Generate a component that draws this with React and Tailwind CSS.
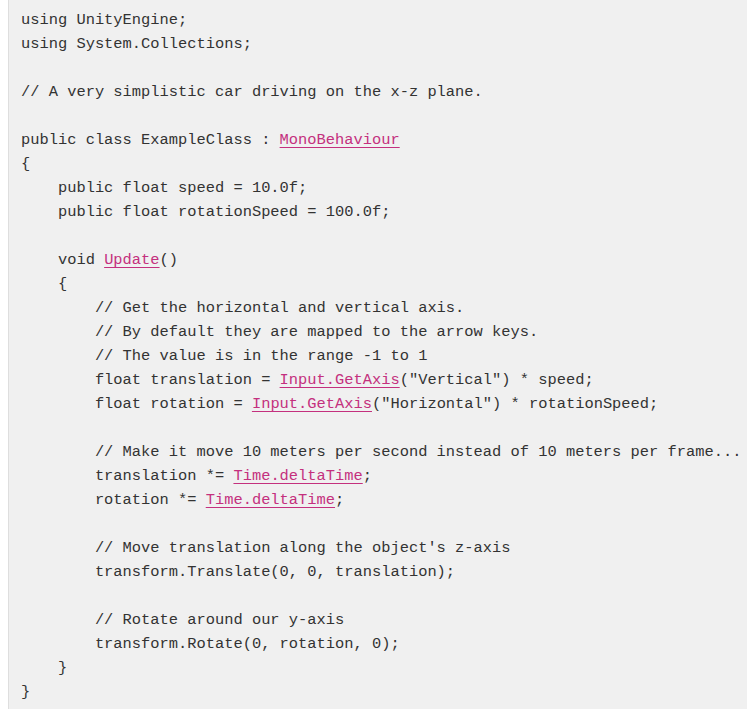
import React from "react";

const L = ({ children }) => (
  <span className="text-[#c4307e] underline decoration-1 underline-offset-[3px]">{children}</span>
);

export default function App() {
  return (
    <div className="bg-white pl-2 h-[709px] overflow-hidden">
      <div className="bg-[#f0f0f0] border-l border-[#dedede] h-full pl-3 pt-[8px] pb-4">
        <pre
          className="m-0 text-[15.4px] leading-[24px] text-[#333333] whitespace-pre"
          style={{ fontFamily: '"Liberation Mono", "DejaVu Sans Mono", monospace' }}
        >
{`using UnityEngine;
using System.Collections;

// A very simplistic car driving on the x-z plane.

public class ExampleClass : `}<L>MonoBehaviour</L>{`
{
    public float speed = 10.0f;
    public float rotationSpeed = 100.0f;

    void `}<L>Update</L>{`()
    {
        // Get the horizontal and vertical axis.
        // By default they are mapped to the arrow keys.
        // The value is in the range -1 to 1
        float translation = `}<L>Input.GetAxis</L>{`("Vertical") * speed;
        float rotation = `}<L>Input.GetAxis</L>{`("Horizontal") * rotationSpeed;

        // Make it move 10 meters per second instead of 10 meters per frame...
        translation *= `}<L>Time.deltaTime</L>{`;
        rotation *= `}<L>Time.deltaTime</L>{`;

        // Move translation along the object's z-axis
        transform.Translate(0, 0, translation);

        // Rotate around our y-axis
        transform.Rotate(0, rotation, 0);
    }
}`}
        </pre>
      </div>
    </div>
  );
}
